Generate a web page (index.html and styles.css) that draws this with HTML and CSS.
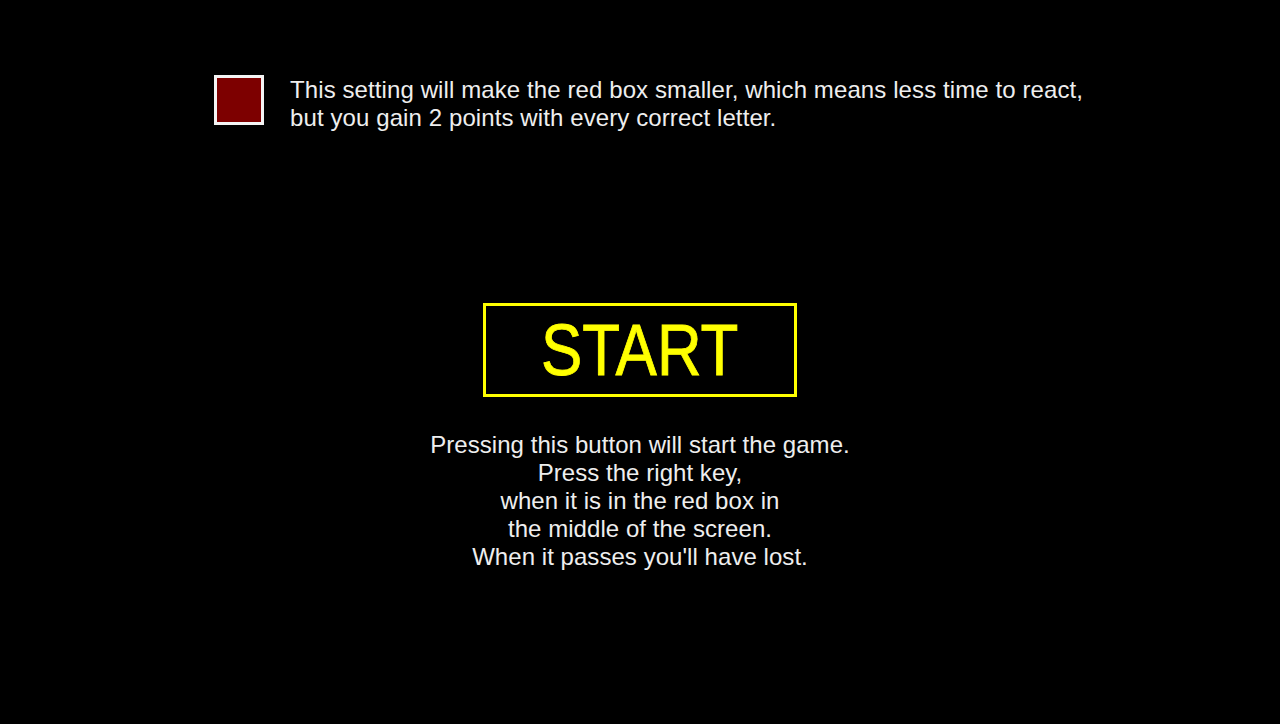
FILE: index.html
```html
<!DOCTYPE html>
<html>
<head>
<meta charset="utf-8">
<link rel="stylesheet" href="styles.css">
</head>
<body>
<div class="page">
  <div class="setting">
    <div class="checkbox"></div>
    <p class="setting-text">This setting will make the red box smaller, which means less time to react,<br>but you gain 2 points with every correct letter.</p>
  </div>
  <div class="center">
    <div class="start"><span class="start-label">START</span></div>
    <p class="info">Pressing this button will start the game.<br>Press the right key,<br>when it is in the red box in<br>the middle of the screen.<br>When it passes you'll have lost.</p>
  </div>
</div>
</body>
</html>
```
FILE: styles.css
```css
html, body {
  margin: 0;
  padding: 0;
  background: #000;
  height: 100%;
}
.page {
  width: 1280px;
  height: 724px;
  background: #000;
  color: #eeeeee;
  font-family: "Liberation Sans", Arial, sans-serif;
  display: flex;
  flex-direction: column;
}
.setting {
  display: flex;
  align-items: flex-start;
  padding: 75px 0 0 214px;
  gap: 26px;
}
.checkbox {
  width: 44px;
  height: 44px;
  border: 3px solid #f4f4f4;
  background: #7d0000;
  flex: none;
}
.setting-text {
  margin: 0;
  font-size: 24px;
  line-height: 28px;
  letter-spacing: 0.1px;
  padding-top: 1px;
}
.center {
  display: flex;
  flex-direction: column;
  align-items: center;
  padding-top: 171px;
}
.start {
  box-sizing: border-box;
  width: 314px;
  height: 94px;
  border: 3px solid #ffff00;
  color: #ffff00;
  font-size: 72px;
  line-height: 88px;
  text-align: center;
}
.start-label {
  display: inline-block;
  transform: scaleX(0.86);
  -webkit-text-stroke: 0.8px #ffff00;
}
.info {
  margin: 0;
  margin-top: 34px;
  font-size: 24px;
  line-height: 28px;
  letter-spacing: 0.05px;
  text-align: center;
}
```
